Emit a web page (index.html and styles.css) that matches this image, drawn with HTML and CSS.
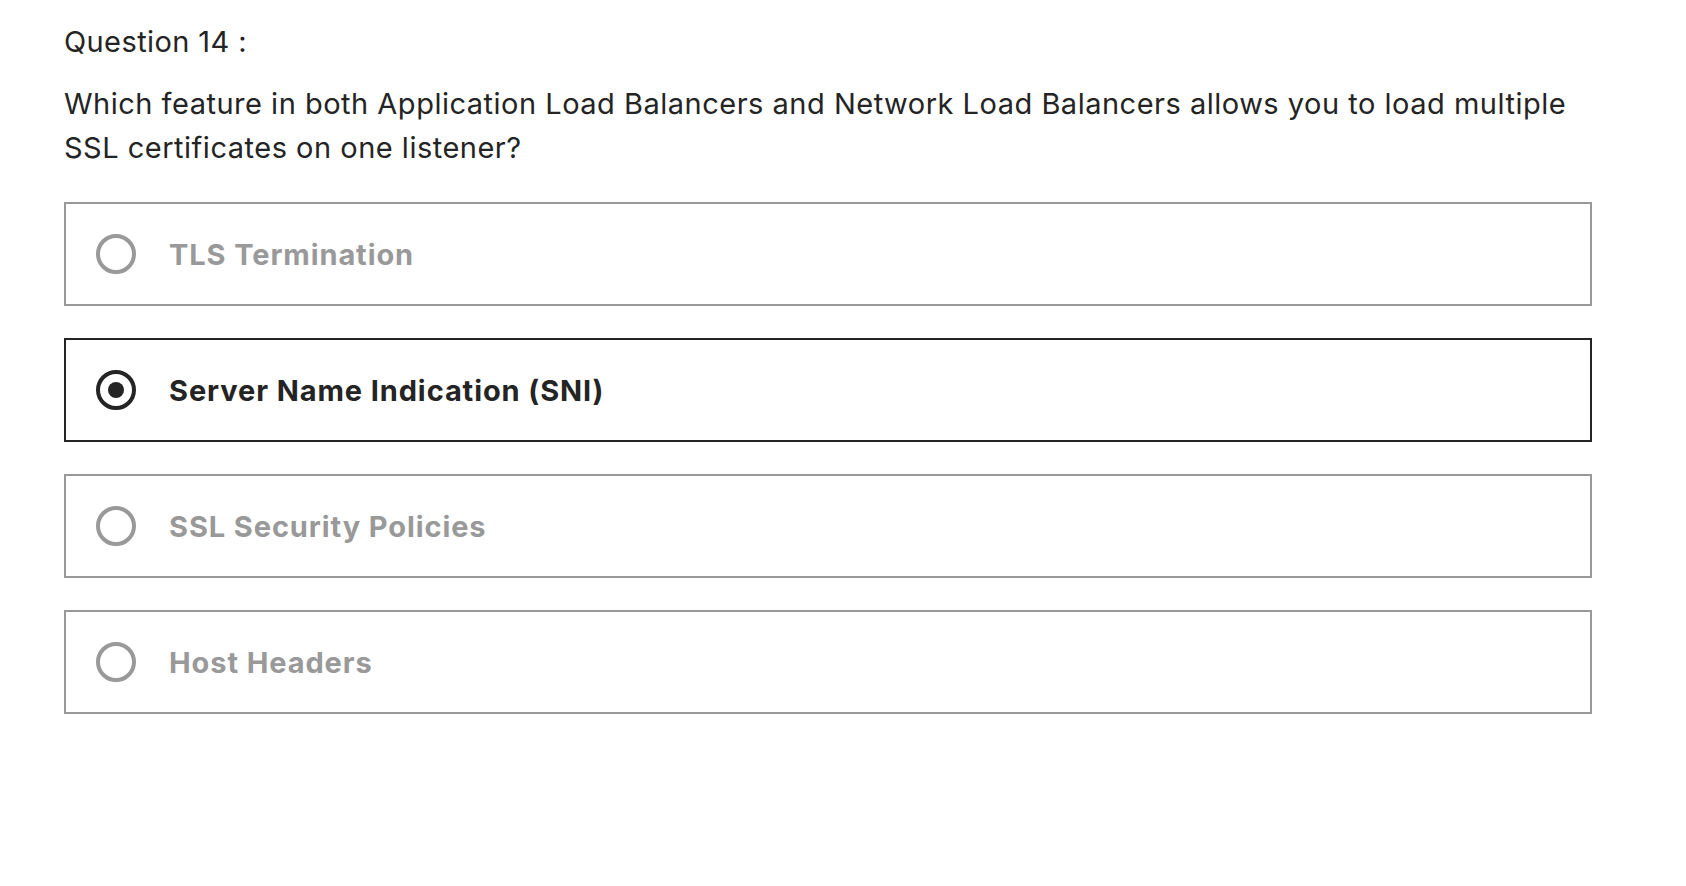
FILE: index.html
```html
<!DOCTYPE html>
<html lang="en">
<head>
<meta charset="utf-8">
<title>Question 14</title>
<link rel="stylesheet" href="styles.css">
</head>
<body>
<main class="quiz">
  <p class="qnum">Question 14 :</p>
  <p class="qtext">Which feature in both Application Load Balancers and Network Load Balancers allows you to load multiple SSL certificates on one listener?</p>
  <div class="options">
    <div class="option">
      <span class="radio"></span>
      <span class="label">TLS Termination</span>
    </div>
    <div class="option selected">
      <span class="radio"></span>
      <span class="label">Server Name Indication (SNI)</span>
    </div>
    <div class="option">
      <span class="radio"></span>
      <span class="label">SSL Security Policies</span>
    </div>
    <div class="option">
      <span class="radio"></span>
      <span class="label">Host Headers</span>
    </div>
  </div>
</main>
</body>
</html>
```

FILE: styles.css
```css
html, body {
  margin: 0;
  padding: 0;
  background: #fff;
}
body {
  font-family: Inter, "Liberation Sans", sans-serif;
  color: #242424;
}
.quiz {
  padding: 21px 0 0 64px;
  width: 1528px;
}
.qnum {
  margin: 0;
  font-size: 29px;
  line-height: 42px;
  letter-spacing: 0.4px;
}
.qtext {
  margin: 19px 0 0 0;
  font-size: 29px;
  line-height: 44px;
  letter-spacing: 0.5px;
}
.options {
  margin-top: 32px;
  display: flex;
  flex-direction: column;
  gap: 32px;
}
.option {
  box-sizing: border-box;
  height: 104px;
  border: 2px solid #999;
  display: flex;
  align-items: center;
  padding-left: 30px;
  color: #999;
}
.option.selected {
  border-color: #242424;
  color: #242424;
}
.radio {
  box-sizing: border-box;
  width: 40px;
  height: 40px;
  border: 4px solid #999;
  border-radius: 50%;
  display: flex;
  align-items: center;
  justify-content: center;
  flex: none;
}
.selected .radio {
  border-color: #242424;
}
.selected .radio::after {
  content: "";
  width: 16px;
  height: 16px;
  border-radius: 50%;
  background: #242424;
}
.label {
  margin-left: 33px;
  font-size: 29px;
  font-weight: 700;
  letter-spacing: 0.9px;
}
```
